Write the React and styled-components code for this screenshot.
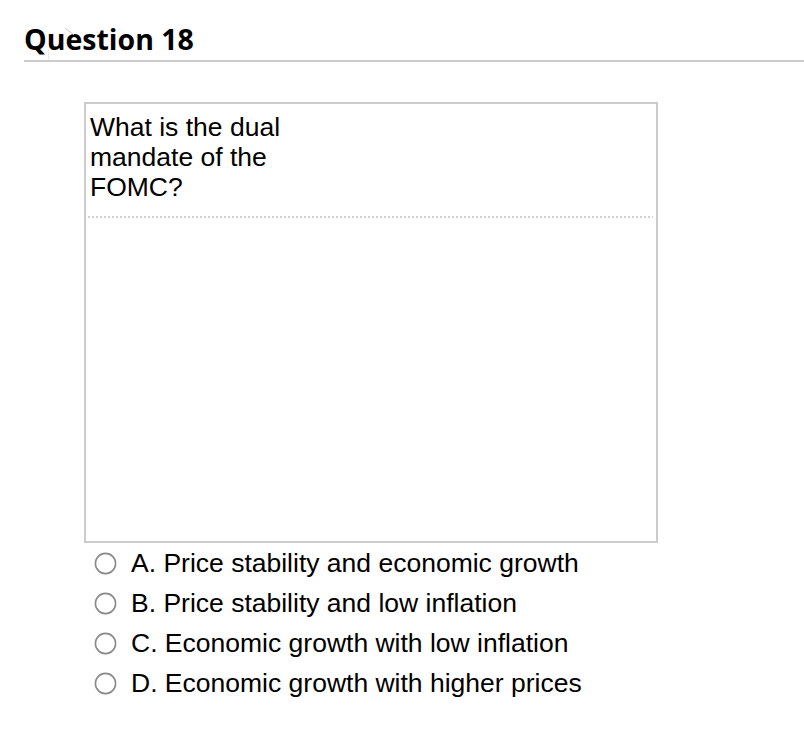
import React from "react";
import styled, { createGlobalStyle } from "styled-components";

const GlobalStyle = createGlobalStyle`
  html, body {
    margin: 0;
    padding: 0;
    background: #FFFFFF;
  }
  body {
    font-family: "Liberation Sans", Arial, sans-serif;
    color: #000;
  }
`;

const Page = styled.div`
  padding: 23px 0 0 24px;
`;

const Header = styled.div`
  position: relative;
  border-bottom: 2px solid #cccccc;
  padding-bottom: 5px;
`;

const Title = styled.h2`
  margin: 0;
  font-family: "Open Sans", "Noto Sans", sans-serif;
  font-weight: 700;
  font-size: 28.5px;
  line-height: 32px;
  color: #000;
`;

// faint marker glyph sitting behind the title
const Marker = styled.svg`
  position: absolute;
  left: 22px;
  top: 3px;
  pointer-events: none;
`;

const QuestionBox = styled.div`
  box-sizing: border-box;
  width: 574px;
  height: 441px;
  margin: 40px 0 0 60px;
  border: 2px solid #cccccc;
`;

const Prompt = styled.div`
  width: 200px;
  padding: 8px 0 0 4px;
  font-size: 26.5px;
  line-height: 30px;
`;

const Divider = styled.div`
  height: 2px;
  margin: 14px 3px 0 2px;
  background: repeating-linear-gradient(
    to right,
    #cfcfcf 0,
    #cfcfcf 2px,
    transparent 2px,
    transparent 4px
  );
`;

const Options = styled.div`
  display: flex;
  flex-direction: column;
  margin-left: 70px;
`;

const Option = styled.label`
  display: flex;
  align-items: center;
  height: 40px;
  gap: 14px;
  font-size: 26.5px;
  cursor: pointer;
`;

const Radio = styled.svg`
  flex: 0 0 23px;
  width: 23px;
  height: 23px;
`;

const answers = [
  "A. Price stability and economic growth",
  "B. Price stability and low inflation",
  "C. Economic growth with low inflation",
  "D. Economic growth with higher prices",
];

export default function App() {
  return (
    <Page>
      <GlobalStyle />
      <Header>
        <Marker width="60" height="36" viewBox="0 0 60 36">
          <line x1="19" y1="2" x2="28" y2="9" stroke="#c8c8c8" strokeWidth="1" />
          <line x1="2.5" y1="24" x2="2.5" y2="34" stroke="#d8d8d8" strokeWidth="1" strokeDasharray="1 1" />
        </Marker>
        <Title>Question 18</Title>
      </Header>
      <QuestionBox>
        <Prompt>What is the dual mandate of the FOMC?</Prompt>
        <Divider />
      </QuestionBox>
      <Options>
        {answers.map((a) => (
          <Option key={a}>
            <Radio viewBox="0 0 23 23">
              <circle cx="11.5" cy="11.5" r="10.1" fill="#fff" stroke="#8a8a8a" strokeWidth="1.6" />
            </Radio>
            {a}
          </Option>
        ))}
      </Options>
    </Page>
  );
}
